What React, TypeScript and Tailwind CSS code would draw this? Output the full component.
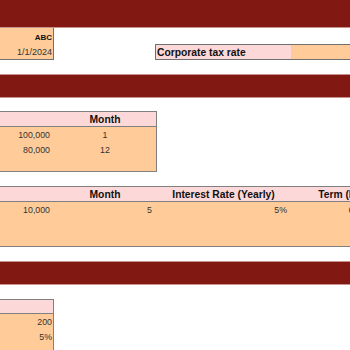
import React from "react";

const font = "font-['Liberation_Sans',Arial,sans-serif]";

function Banner() {
  return <div className="h-[24px] shrink-0 bg-[#821812] border-y border-[#c8928e]" />;
}

type Cell = { text?: string; align?: "left" | "right" | "center"; w: string };

function Row({ cells, h, bg, bold, top }: { cells: Cell[]; h: string; bg: string; bold?: boolean; top: string }) {
  return (
    <div className={`flex ${h} ${bg} shrink-0`}>
      {cells.map((c, i) => (
        <div
          key={i}
          className={`${c.w} shrink-0 flex items-center ${top} whitespace-nowrap overflow-hidden ${
            c.align === "right" ? "justify-end pr-[4px]" : c.align === "center" ? "justify-center" : "justify-start pl-[2px]"
          } ${bold ? "font-bold text-[10.3px] text-[#111]" : "text-[8.8px] text-[#333]"}`}
        >
          {c.text}
        </div>
      ))}
    </div>
  );
}

export default function App() {
  return (
    <div className={`w-[350px] h-[350px] overflow-hidden bg-white flex flex-col ${font}`}>
      {/* sheet title strip */}
      <div className="h-[28px] shrink-0 bg-[#821812] border-b border-[#c8928e]" />

      {/* company info + tax rate */}
      <div className="h-[32px] shrink-0 flex">
        <div className="w-[54px] shrink-0 bg-[#ffcc99] border-r border-b border-[#707070] flex flex-col">
          <div className="h-[16px] flex items-center justify-end pr-[1px] pt-[3px] font-bold text-[8px] text-[#111]">ABC</div>
          <div className="h-[15px] flex items-center justify-end pr-[1px] pt-[3px] text-[9px] text-[#333]">1/1/2024</div>
        </div>
        <div className="w-[101px] shrink-0" />
        <div className="flex-1 flex flex-col">
          <div className="h-[16px] shrink-0" />
          <div className="h-[16px] shrink-0 flex border-l border-y border-[#707070]">
            <div className="w-[135px] shrink-0 bg-[#fcd9d8] flex items-center pl-[1px] pt-[1px] font-bold text-[10.3px] text-[#111] whitespace-nowrap">
              Corporate tax rate
            </div>
            <div className="flex-1 bg-[#ffcc99]" />
          </div>
        </div>
      </div>

      <div className="h-[14px] shrink-0" />
      <Banner />
      <div className="h-[13px] shrink-0" />

      {/* revenue table */}
      <div className="w-[157px] shrink-0 border-y border-r border-[#808080] flex flex-col">
        <Row
          h="h-[14px]"
          bg="bg-[#fcd9d8]"
          bold
          top="pt-[2px]"
          cells={[{ w: "w-[54px]" }, { w: "w-[102px]", text: "Month", align: "center" }]}
        />
        <div className="h-px bg-[#808080]" />
        <div className="h-[44px] bg-[#ffcc99] flex flex-col">
          <Row h="h-[15px]" bg="" top="pt-[3px]" cells={[{ w: "w-[54px]", text: "100,000", align: "right" }, { w: "w-[102px]", text: "1", align: "center" }]} />
          <Row h="h-[15px]" bg="" top="pt-[3px]" cells={[{ w: "w-[54px]", text: "80,000", align: "right" }, { w: "w-[102px]", text: "12", align: "center" }]} />
        </div>
      </div>

      <div className="h-[14px] shrink-0" />

      {/* loan table */}
      <div className="w-full shrink-0 border-y border-[#808080] flex flex-col">
        <Row
          h="h-[14px]"
          bg="bg-[#fcd9d8]"
          bold
          top="pt-[2px]"
          cells={[
            { w: "w-[54px]" },
            { w: "w-[102px]", text: "Month", align: "center" },
            { w: "w-[135px]", text: "Interest Rate (Yearly)", align: "center" },
            { w: "w-[125px]", text: "Term (Months)", align: "center" },
          ]}
        />
        <div className="h-px bg-[#808080]" />
        <div className="h-[44px] bg-[#ffcc99] flex flex-col">
          <Row
            h="h-[15px]"
            bg=""
            top="pt-[3px]"
            cells={[
              { w: "w-[54px]", text: "10,000", align: "right" },
              { w: "w-[102px]", text: "5", align: "right" },
              { w: "w-[135px]", text: "5%", align: "right" },
              { w: "w-[125px]", text: "60", align: "center" },
            ]}
          />
        </div>
      </div>

      <div className="h-[14px] shrink-0" />
      <Banner />
      <div className="h-[14px] shrink-0" />

      {/* assumptions table */}
      <div className="w-[54px] shrink-0 border-t border-r border-[#808080] flex flex-col">
        <div className="h-[13px] bg-[#fcd9d8]" />
        <div className="h-px bg-[#808080]" />
        <div className="h-[40px] bg-[#ffcc99] flex flex-col">
          <div className="h-[15px] flex items-center justify-end pr-[1px] pt-[3px] text-[8.8px] text-[#333]">200</div>
          <div className="h-[15px] flex items-center justify-end pr-[1px] pt-[3px] text-[8.8px] text-[#333]">5%</div>
        </div>
      </div>
    </div>
  );
}
